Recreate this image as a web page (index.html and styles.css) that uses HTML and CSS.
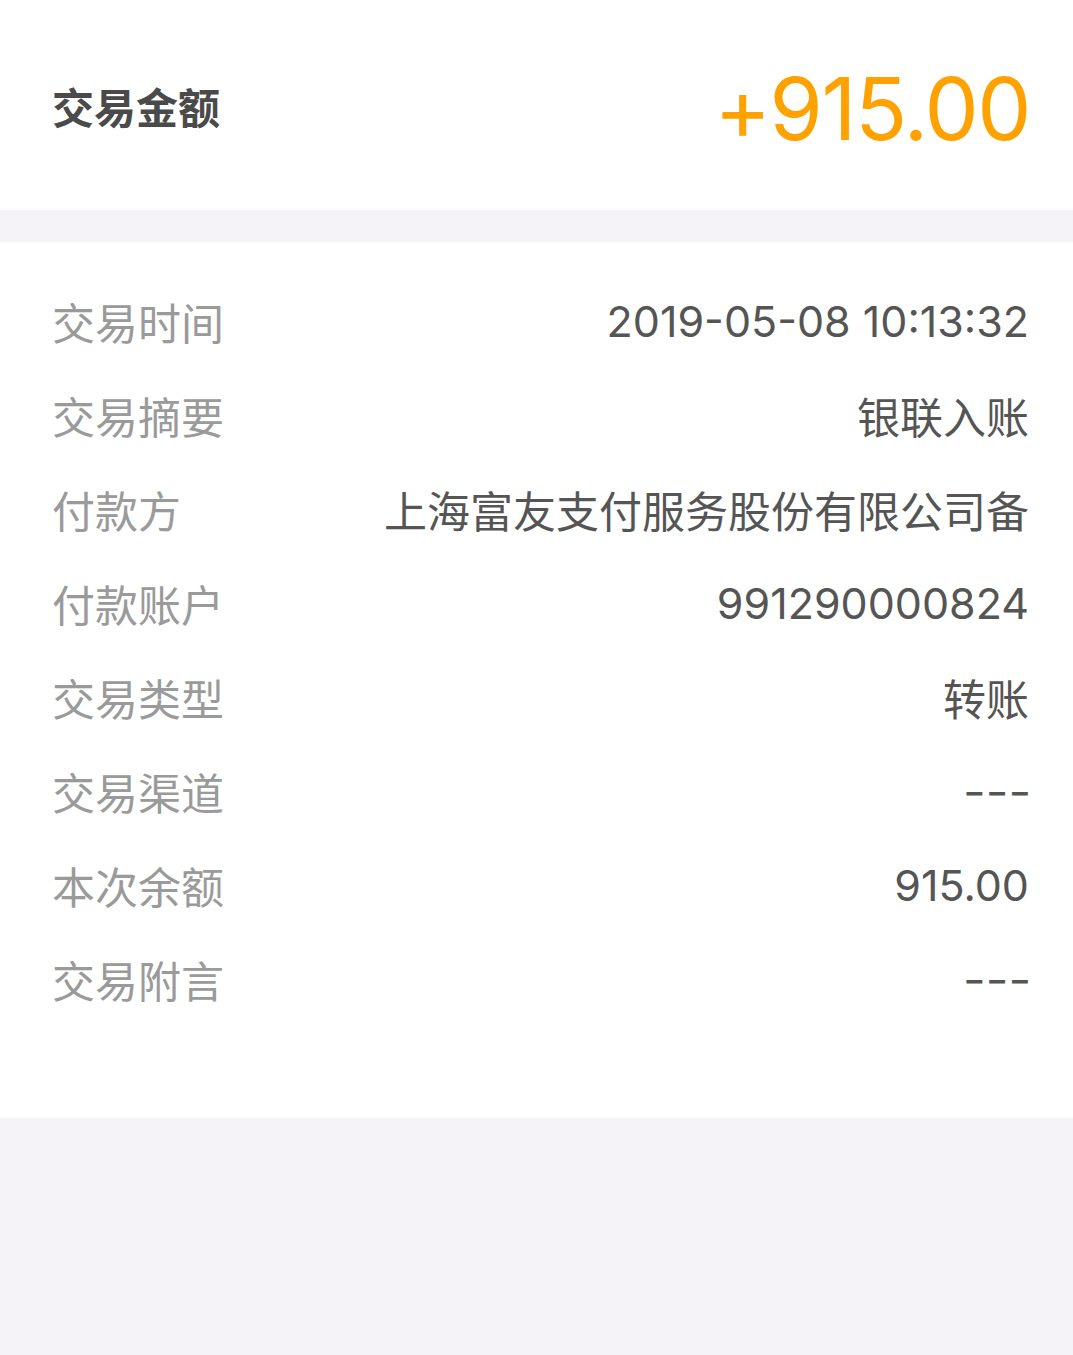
FILE: index.html
```html
<!DOCTYPE html>
<html lang="zh-CN">
<head>
    <meta charset="UTF-8">
    <meta name="viewport" content="width=device-width, initial-scale=1.0">
    <title>交易详情</title>
    <link rel="stylesheet" href="styles.css">
</head>
<body>
    <div class="summary">
        <span class="summary-label">交易金额</span>
        <span class="summary-amount">+915.00</span>
    </div>

    <div class="details">
        <div class="row">
            <span class="label">交易时间</span>
            <span class="value">2019-05-08 10:13:32</span>
        </div>
        <div class="row">
            <span class="label">交易摘要</span>
            <span class="value">银联入账</span>
        </div>
        <div class="row">
            <span class="label">付款方</span>
            <span class="value">上海富友支付服务股份有限公司备</span>
        </div>
        <div class="row">
            <span class="label">付款账户</span>
            <span class="value">991290000824</span>
        </div>
        <div class="row">
            <span class="label">交易类型</span>
            <span class="value">转账</span>
        </div>
        <div class="row">
            <span class="label">交易渠道</span>
            <span class="value empty">---</span>
        </div>
        <div class="row">
            <span class="label">本次余额</span>
            <span class="value">915.00</span>
        </div>
        <div class="row">
            <span class="label">交易附言</span>
            <span class="value empty">---</span>
        </div>
    </div>
</body>
</html>
```

FILE: styles.css
```css
html, body {
    margin: 0;
    padding: 0;
}
body {
    font-family: Inter, "Noto Sans CJK SC", sans-serif;
    background-color: #f6f3f8;
    min-height: 1355px;
}
.summary {
    background-color: white;
    height: 210px;
    padding: 0 43px 0 52px;
    display: flex;
    align-items: center;
    justify-content: space-between;
    margin-bottom: 32px;
}
.summary-label {
    font-size: 42px;
    font-weight: 700;
    color: #4a4a4a;
}
.summary-amount {
    font-size: 86px;
    color: #ffa200;
    letter-spacing: -1.5px;
    margin-top: 8px;
}
.details {
    background-color: white;
    padding: 35px 44px 89px 52px;
}
.row {
    height: 94px;
    display: flex;
    align-items: center;
    justify-content: space-between;
    font-size: 43px;
}
.label {
    color: #9a9a9a;
    margin-top: -6px;
}
.value {
    color: #555;
    margin-top: -6px;
}
.empty {
    display: inline-block;
    transform: scaleX(1.15);
    transform-origin: right center;
    margin-right: -2px;
}
```
